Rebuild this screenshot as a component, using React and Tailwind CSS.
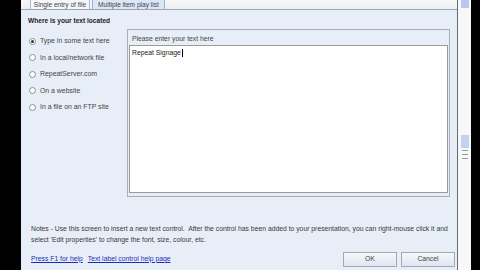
import React from 'react';

const radios = [
  { label: 'Type in some text here', checked: true },
  { label: 'In a local/network file' },
  { label: 'RepeatServer.com' },
  { label: 'On a website' },
  { label: 'In a file on an FTP site' },
];

const Radio = ({ checked }) => (
  <span className="w-[7px] h-[7px] rounded-full border border-[#8d8d8d] bg-white flex items-center justify-center shrink-0">
    {checked && <span className="w-[3px] h-[3px] rounded-full bg-[#333]" />}
  </span>
);

export default function App() {
  return (
    <div
      className="w-[480px] h-[270px] bg-black flex overflow-hidden text-[#333]"
      style={{ fontFamily: '"Liberation Sans", Arial, sans-serif' }}
    >
      <div className="w-[21px] shrink-0" />

      {/* main dialog panel */}
      <div className="w-[436px] shrink-0 h-full bg-[#e8eef7] flex flex-col">
        {/* tabs */}
        <div className="h-[10px] shrink-0 flex items-end bg-gradient-to-b from-[#f7f7f7] to-[#eceff3] border-b border-[#9aa6b6] pl-[9px]">
          <div className="h-[10px] w-[60px] bg-[#f4f6f9] border-x border-[#b5bcc6] flex items-end justify-center text-[6.6px] leading-[8px] text-[#444]">
            Single entry of file
          </div>
          <div className="h-[10px] w-[73px] ml-[2px] bg-[#dbe7f6] border-x border-[#9eb2cf] flex items-end justify-center text-[6.6px] leading-[8px] text-[#444]">
            Multiple item play list
          </div>
        </div>

        {/* header */}
        <div className="h-[19px] shrink-0 flex items-center pl-[7px] pt-[2px] text-[6.6px] font-bold text-[#222]">
          Where is your text located
        </div>

        {/* columns */}
        <div className="h-[168px] shrink-0 flex pl-[8px]">
          <div className="w-[98px] shrink-0 flex flex-col pt-[4px]">
            {radios.map((r) => (
              <div key={r.label} className="h-[16.5px] flex items-center gap-[4px] text-[6.9px] text-[#444]">
                <Radio checked={r.checked} />
                <span>{r.label}</span>
              </div>
            ))}
          </div>
          <div className="w-[323px] shrink-0 border border-[#a9aeb5] flex flex-col p-[1px]">
            <div className="h-[14px] shrink-0 flex items-center pl-[3px] pt-[3px] text-[6.8px] text-[#444]">
              Please enter your text here
            </div>
            <div className="flex-1 bg-white border border-[#9a9a9a] mb-[2px] px-[2px] pt-[2px]">
              <div className="flex items-center text-[6.8px] text-[#222] leading-[9px]">
                Repeat Signage
                <span className="w-px h-[8px] bg-black ml-[1px]" />
              </div>
            </div>
          </div>
        </div>

        {/* notes */}
        <div className="mt-[26px] pl-[10px] text-[6.8px] leading-[11px] text-[#3a3a3a] whitespace-nowrap">
          <div>
            Notes - Use this screen to insert a new text control.&nbsp; After the control has been added to your presentation, you can right-mouse click it and
          </div>
          <div>select 'Edit properties' to change the font, size, colour, etc.</div>
        </div>

        {/* bottom row */}
        <div className="mt-[6px] h-[16px] shrink-0 flex items-center pl-[10px]">
          <span className="text-[6.8px] text-[#1a2fb8] underline">Press F1 for help</span>
          <span className="ml-[5px] text-[6.8px] text-[#1a2fb8] underline">Text label control help page</span>
          <div className="ml-auto flex gap-[4px] mr-[2px]">
            <div className="w-[54px] h-[15px] border border-[#a3a9b3] bg-gradient-to-b from-[#f6f8fb] to-[#dfe6ef] flex items-center justify-center text-[6.8px] text-[#444]">
              OK
            </div>
            <div className="w-[54px] h-[15px] border border-[#a3a9b3] bg-gradient-to-b from-[#f6f8fb] to-[#dfe6ef] flex items-center justify-center text-[6.8px] text-[#444]">
              Cancel
            </div>
          </div>
        </div>
        <div className="flex-1" />
      </div>

      {/* scroll strip */}
      <div className="w-[14px] shrink-0 h-full bg-[#f7f8fa] border-l border-[#6a6a6a] flex flex-col items-center">
        <div className="w-[8px] h-[8px] bg-[#b9c9ee]" />
        <div className="mt-[127px] w-[8px] h-[13px] bg-[#c3d1f2]" />
        <div className="mt-[2px] w-[6px] flex flex-col gap-[3px]">
          <div className="h-px bg-[#9a9a9a]" />
          <div className="h-px bg-[#9a9a9a]" />
          <div className="h-px bg-[#9a9a9a]" />
        </div>
      </div>
      <div className="flex-1" />
    </div>
  );
}
